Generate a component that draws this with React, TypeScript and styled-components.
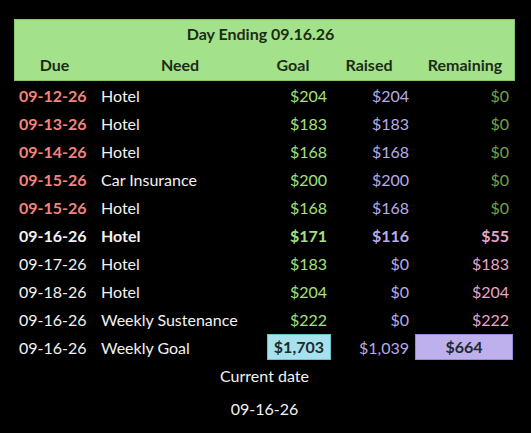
import styled, { createGlobalStyle } from 'styled-components';

const GlobalStyle = createGlobalStyle`
  *, *::before, *::after {
    box-sizing: border-box;
  }
  html, body {
    margin: 0;
    padding: 0;
    background: #000;
  }
  body {
    font-family: Lato, "Open Sans", sans-serif;
    color: #f2f2f2;
  }
`;

type Tone = 'past' | 'today' | 'future';

interface Row {
  due: string;
  need: string;
  goal: string;
  raised: string;
  remaining: string;
  tone: Tone;
}

const rows: Row[] = [
  { due: '09-12-26', need: 'Hotel', goal: '$204', raised: '$204', remaining: '$0', tone: 'past' },
  { due: '09-13-26', need: 'Hotel', goal: '$183', raised: '$183', remaining: '$0', tone: 'past' },
  { due: '09-14-26', need: 'Hotel', goal: '$168', raised: '$168', remaining: '$0', tone: 'past' },
  { due: '09-15-26', need: 'Car Insurance', goal: '$200', raised: '$200', remaining: '$0', tone: 'past' },
  { due: '09-15-26', need: 'Hotel', goal: '$168', raised: '$168', remaining: '$0', tone: 'past' },
  { due: '09-16-26', need: 'Hotel', goal: '$171', raised: '$116', remaining: '$55', tone: 'today' },
  { due: '09-17-26', need: 'Hotel', goal: '$183', raised: '$0', remaining: '$183', tone: 'future' },
  { due: '09-18-26', need: 'Hotel', goal: '$204', raised: '$0', remaining: '$204', tone: 'future' },
  { due: '09-16-26', need: 'Weekly Sustenance', goal: '$222', raised: '$0', remaining: '$222', tone: 'future' },
];

const COLS = '87px 156px 70px 82px 106px';

const Page = styled.div`
  padding: 19px 16px 0 14px;
  width: 531px;
`;

const HeaderBox = styled.div`
  background: #a3e28b;
  border: 1px solid #86c46e;
  color: #1d2c16;
  font-weight: 700;
  font-size: 16px;
`;

const Title = styled.div`
  height: 31px;
  display: flex;
  align-items: center;
  justify-content: center;
  padding: 0 8px 4px 0;
`;

const Grid = styled.div`
  display: grid;
  grid-template-columns: ${COLS};
  align-items: center;
`;

const HeadRow = styled(Grid)`
  height: 29px;
  padding-bottom: 3px;
  & > div {
    text-align: center;
  }
  & > div:first-child {
    padding-right: 8px;
  }
  & > div:last-child {
    padding-left: 4px;
  }
`;

const BodyRow = styled(Grid)<{ $bold?: boolean }>`
  height: 28px;
  padding-bottom: 4px;
  font-size: 16px;
  font-weight: ${(p) => (p.$bold ? 700 : 400)};
`;

const Due = styled.div<{ $tone: Tone }>`
  padding-left: 5px;
  color: ${(p) => (p.$tone === 'past' ? '#f4847f' : '#f2f2f2')};
  font-weight: ${(p) => (p.$tone === 'future' ? 400 : 700)};
`;

const Need = styled.div`
  color: #f2f2f2;
`;

const Money = styled.div<{ $color: string }>`
  text-align: right;
  color: ${(p) => p.$color};
`;

const Remaining = styled(Money)`
  padding-right: 6px;
`;

const TotalBox = styled.span<{ $bg: string; $border: string }>`
  display: inline-flex;
  align-items: center;
  justify-content: center;
  height: 26px;
  padding-bottom: 2px;
  background: ${(p) => p.$bg};
  border: 1px solid ${(p) => p.$border};
  color: #1e2a2c;
  font-weight: 700;
`;

const GoalTotal = styled(TotalBox)`
  padding: 0 6px 2px;
  margin-right: -4px;
`;

const RemainingTotal = styled(TotalBox)`
  width: 98px;
  margin-left: 6px;
`;

const TotalRow = styled(BodyRow)`
  padding-bottom: 2px;
  margin-top: -1px;
`;

const Footer = styled.div`
  display: flex;
  flex-direction: column;
  align-items: center;
  gap: 14px;
  padding-top: 4px;
  font-size: 16px;
  color: #f2f2f2;
`;

const Spacer = styled.div`
  height: 2px;
`;

export default function App() {
  return (
    <Page>
      <GlobalStyle />
      <HeaderBox>
        <Title>Day Ending 09.16.26</Title>
        <HeadRow>
          <div>Due</div>
          <div>Need</div>
          <div>Goal</div>
          <div>Raised</div>
          <div>Remaining</div>
        </HeadRow>
      </HeaderBox>
      <Spacer />
      {rows.map((r, i) => (
        <BodyRow key={i} $bold={r.tone === 'today'}>
          <Due $tone={r.tone}>{r.due}</Due>
          <Need>{r.need}</Need>
          <Money $color="#a6e07f">{r.goal}</Money>
          <Money $color="#b7abe8">{r.raised}</Money>
          <Remaining $color={r.remaining === '$0' ? '#6fa446' : '#e8a6c9'}>{r.remaining}</Remaining>
        </BodyRow>
      ))}
      <TotalRow>
        <Due $tone="future">09-16-26</Due>
        <Need>Weekly Goal</Need>
        <Money $color="#1e2a2c">
          <GoalTotal $bg="#a5e2ee" $border="#6fc0cf">$1,703</GoalTotal>
        </Money>
        <Money $color="#b7abe8">$1,039</Money>
        <div>
          <RemainingTotal $bg="#bdb0ec" $border="#9a8ad4">$664</RemainingTotal>
        </div>
      </TotalRow>
      <Footer>
        <div>Current date</div>
        <div>09-16-26</div>
      </Footer>
    </Page>
  );
}
